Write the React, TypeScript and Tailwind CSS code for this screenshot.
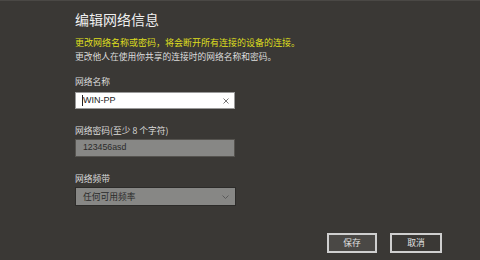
import React from "react";

export default function App() {
  const font = { fontFamily: '"Noto Sans CJK SC", "Noto Sans", sans-serif' };
  const latin = { fontFamily: '"Liberation Sans", "Noto Sans CJK SC", sans-serif' };
  return (
    <div
      className="w-[480px] h-[260px] bg-[#3a3835] border-t border-[#4a4845] overflow-hidden flex flex-col"
      style={font}
    >
      <div className="pl-[75px] flex flex-col">
        <h1 className="mt-[9px] text-[14px] leading-[18px] text-[#efefef]">编辑网络信息</h1>
        <p className="mt-[8px] text-[9px] leading-[14px] text-[#dede1e]">
          更改网络名称或密码，将会断开所有连接的设备的连接。
        </p>
        <p className="text-[8.75px] leading-[14px] text-[#dcdcdc]">
          更改他人在使用你共享的连接时的网络名称和密码。
        </p>

        <label className="mt-[11px] text-[8.75px] leading-[14px] text-[#dcdcdc]">网络名称</label>
        <div className="mt-[3px] w-[160px] h-[17px] bg-white border border-[#9a9a9a] flex items-center pl-[6px] pr-[5px]">
          <span className="w-px h-[11px] bg-[#222]" />
          <span className="text-[9px] text-[#222] flex-1" style={latin}>
            WIN-PP
          </span>
          <svg width="6" height="6" viewBox="0 0 6 6" className="text-[#777]">
            <path d="M0.5 0.5L5.5 5.5M5.5 0.5L0.5 5.5" stroke="currentColor" strokeWidth="1" />
          </svg>
        </div>

        <label className="mt-[15px] text-[8.75px] leading-[14px] text-[#dcdcdc]">
          网络密码(至少 8 个字符)
        </label>
        <div className="mt-[1px] w-[160px] h-[18px] bg-[#878785] border border-[#55534f] flex items-center pl-[7px]">
          <span className="text-[8.75px] text-[#2a2a2a]" style={latin}>
            123456asd
          </span>
        </div>

        <label className="mt-[15px] text-[8.75px] leading-[14px] text-[#dcdcdc]">网络频带</label>
        <div className="mt-[1px] w-[161px] h-[19px] bg-[#878785] border border-[#2c2b29] flex items-center pl-[7px] pr-[6px]">
          <span className="text-[8.75px] text-[#2a2a2a] flex-1">任何可用频率</span>
          <svg width="7" height="4" viewBox="0 0 7 4" className="text-[#5a5a5a]">
            <path d="M0.5 0.5L3.5 3.5L6.5 0.5" fill="none" stroke="currentColor" strokeWidth="1" />
          </svg>
        </div>
      </div>

      <div className="mt-auto mb-[7px] flex justify-end gap-[13px] pr-[38px]">
        <button className="w-[50px] h-[20px] border-2 border-[#cfcfcf] bg-[#4a4845] text-[8.75px] text-[#e0e0e0] leading-none">
          保存
        </button>
        <button className="w-[52px] h-[20px] border-2 border-[#cfcfcf] bg-[#3a3835] text-[8.75px] text-[#e0e0e0] leading-none">
          取消
        </button>
      </div>
    </div>
  );
}
